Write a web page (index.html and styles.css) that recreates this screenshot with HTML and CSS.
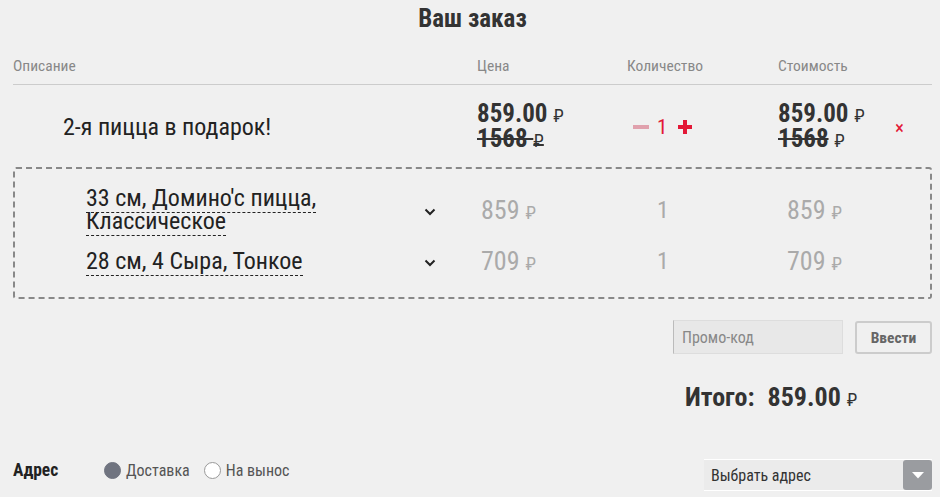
FILE: index.html
```html
<!DOCTYPE html>
<html lang="ru">
<head>
    <meta charset="UTF-8">
    <meta name="viewport" content="width=device-width, initial-scale=1.0">
    <title>Ваш заказ</title>
    <link rel="stylesheet" href="styles.css">
</head>
<body>
    <div class="order">
        <h1 class="order-title">Ваш заказ</h1>

        <div class="order-head">
            <div>Описание</div>
            <div>Цена</div>
            <div>Количество</div>
            <div>Стоимость</div>
        </div>

        <div class="order-row">
            <div class="desc">2-я пицца в подарок!</div>
            <div class="price">
                <div class="now">859.00 <span class="rub">₽</span></div>
                <div class="old"><s>1568 <span class="rub">₽</span></s></div>
            </div>
            <div class="qty">
                <span class="qty-btn minus"></span>
                <span class="qty-num">1</span>
                <span class="qty-btn plus"></span>
            </div>
            <div class="price">
                <div class="now">859.00 <span class="rub">₽</span></div>
                <div class="old"><s>1568</s> <span class="rub">₽</span></div>
            </div>
            <div class="remove">&times;</div>
        </div>

        <div class="combo">
            <div class="combo-row">
                <div class="combo-desc">
                    <div class="combo-name">
                        <span>33 см, Домино'с пицца,</span><br>
                        <span>Классическое</span>
                    </div>
                    <svg class="chevron" width="12" height="8" viewBox="0 0 12 8"><path d="M1.5 1.5 L6 6 L10.5 1.5" fill="none" stroke="#222" stroke-width="2"/></svg>
                </div>
                <div class="combo-price">859 <span class="rub">₽</span></div>
                <div class="combo-qty">1</div>
                <div class="combo-price cost">859 <span class="rub">₽</span></div>
            </div>
            <div class="combo-row">
                <div class="combo-desc">
                    <div class="combo-name">
                        <span>28 см, 4 Сыра, Тонкое</span>
                    </div>
                    <svg class="chevron" width="12" height="8" viewBox="0 0 12 8"><path d="M1.5 1.5 L6 6 L10.5 1.5" fill="none" stroke="#222" stroke-width="2"/></svg>
                </div>
                <div class="combo-price">709 <span class="rub">₽</span></div>
                <div class="combo-qty">1</div>
                <div class="combo-price cost">709 <span class="rub">₽</span></div>
            </div>
        </div>

        <div class="promo">
            <input class="promo-input" type="text" placeholder="Промо-код">
            <button class="promo-btn">Ввести</button>
        </div>

        <div class="total">
            <span class="total-label">Итого:</span>
            <span class="total-sum">859.00 <span class="rub">₽</span></span>
        </div>

        <div class="address">
            <div class="address-label">Адрес</div>
            <label class="radio"><span class="radio-dot checked"></span>Доставка</label>
            <label class="radio"><span class="radio-dot"></span>На вынос</label>
            <div class="select">
                <span class="select-text">Выбрать адрес</span>
                <span class="select-arrow"><svg width="12" height="7" viewBox="0 0 12 7"><path d="M0 0 L12 0 L6 6.5 Z" fill="#fff"/></svg></span>
            </div>
        </div>
    </div>
</body>
</html>
```

FILE: styles.css
```css
html, body {
    margin: 0;
    padding: 0;
    background-color: #f0f0f0;
    font-family: "Roboto Condensed", "Liberation Sans Narrow", Roboto, sans-serif;
    color: #222;
    overflow: hidden;
}
.order {
    width: 919px;
    padding: 0 8px 0 13px;
}
.order-title {
    margin: 0;
    padding-top: 5px;
    height: 34px;
    text-align: center;
    font-size: 25px;
    font-weight: 700;
    line-height: 28px;
    color: #333;
}
/* шапка таблицы */
.order-head {
    display: grid;
    grid-template-columns: 464px 150px 151px 1fr;
    padding-top: 17px;
    height: 28px;
    font-size: 15.5px;
    line-height: 20px;
    color: #888;
    border-bottom: 1px solid #ccc;
}
.order-row {
    display: grid;
    grid-template-columns: 464px 150px 151px 113px 1fr;
    align-items: center;
    height: 82px;
    padding-top: 2px;
    box-sizing: border-box;
}
.desc {
    padding-left: 50px;
    font-size: 24px;
}
.price .now,
.price .old {
    font-size: 25px;
    font-weight: 700;
    line-height: 23px;
    color: #333;
}
.price .old s {
    text-decoration-thickness: 2px;
}
.rub {
    font-size: 18px;
    font-weight: 400;
}
.qty {
    display: flex;
    align-items: center;
    padding-left: 6px;
}
.qty-btn {
    position: relative;
    display: block;
}
.qty-btn.minus {
    width: 16px;
    height: 4px;
    background: #e0a1ad;
}
.qty-btn.plus {
    width: 14px;
    height: 14px;
    margin-left: 11px;
}
.qty-btn.plus::before,
.qty-btn.plus::after {
    content: "";
    position: absolute;
    background: #e31837;
}
.qty-btn.plus::before {
    left: 0;
    top: 5px;
    width: 14px;
    height: 4px;
}
.qty-btn.plus::after {
    left: 5px;
    top: 0;
    width: 4px;
    height: 14px;
}
.qty-num {
    margin-left: 8px;
    font-size: 21px;
    color: #e31837;
}
.remove {
    color: #e31837;
    font-size: 19px;
    padding-left: 4px;
}
/* комбо с пиццами */
.combo {
    border: 2px dashed #888;
    border-radius: 3px;
    height: 132px;
    box-sizing: border-box;
    padding-top: 16px;
}
.combo-row {
    display: grid;
    grid-template-columns: 466px 150px 151px 1fr;
    align-items: center;
    min-height: 50px;
}
.combo-row + .combo-row {
    min-height: 52px;
}
.combo-desc {
    display: flex;
    align-items: center;
    justify-content: space-between;
    padding: 0 45px 0 71px;
}
.combo-name {
    font-size: 24px;
    line-height: 23px;
}
.combo-name span {
    border-bottom: 1px dashed #222;
}
.chevron {
    margin-top: 4px;
}
.combo-price {
    font-size: 26px;
    color: #aaa;
}
.combo-price.cost {
    padding-left: 5px;
}
.combo-qty {
    font-size: 24px;
    color: #aaa;
    padding-left: 26px;
}
/* промо-код */
.promo {
    display: flex;
    justify-content: flex-end;
    gap: 12px;
    margin-top: 21px;
}
.promo-input {
    width: 170px;
    height: 34px;
    box-sizing: border-box;
    border: 1px solid #ddd;
    border-left-color: #bbb;
    background: #e8e8e8;
    padding: 0 8px;
    font-family: inherit;
    font-size: 16px;
    outline: none;
}
.promo-input::placeholder {
    color: #888;
}
.promo-btn {
    width: 77px;
    height: 33px;
    margin-top: 1px;
    border: 2px solid #ccc;
    border-radius: 3px;
    background: #f0f0f0;
    font-family: inherit;
    font-size: 15.5px;
    font-weight: 700;
    color: #666;
}
.total {
    display: flex;
    gap: 13px;
    padding-left: 672px;
    margin-top: 28px;
    font-size: 26px;
    font-weight: 700;
    color: #333;
}
.total .rub {
    font-size: 18px;
}
/* адрес */
.address {
    display: flex;
    align-items: center;
    margin-top: 37px;
}
.address-label {
    width: 91px;
    font-size: 17.5px;
    font-weight: 700;
}
.radio {
    display: flex;
    align-items: center;
    gap: 5px;
    margin-right: 14px;
    font-size: 16px;
    color: #555;
}
.radio-dot {
    width: 15px;
    height: 15px;
    border-radius: 50%;
    border: 1px solid #999;
    background: #fff;
}
.radio-dot.checked {
    background: #707480;
    border-color: #707480;
}
.select {
    display: flex;
    align-items: center;
    justify-content: space-between;
    margin-left: auto;
    width: 228px;
    height: 30px;
    margin-top: 10px;
    background: #ebebeb;
    border-top: 1px solid #fff;
    border-bottom: 1px solid #fff;
    font-size: 16px;
    color: #333;
}
.select-text {
    padding-left: 7px;
}
.select-arrow {
    display: flex;
    align-items: center;
    justify-content: center;
    width: 29px;
    height: 30px;
    background: #9a9ca0;
    border-radius: 3px;
}
```
